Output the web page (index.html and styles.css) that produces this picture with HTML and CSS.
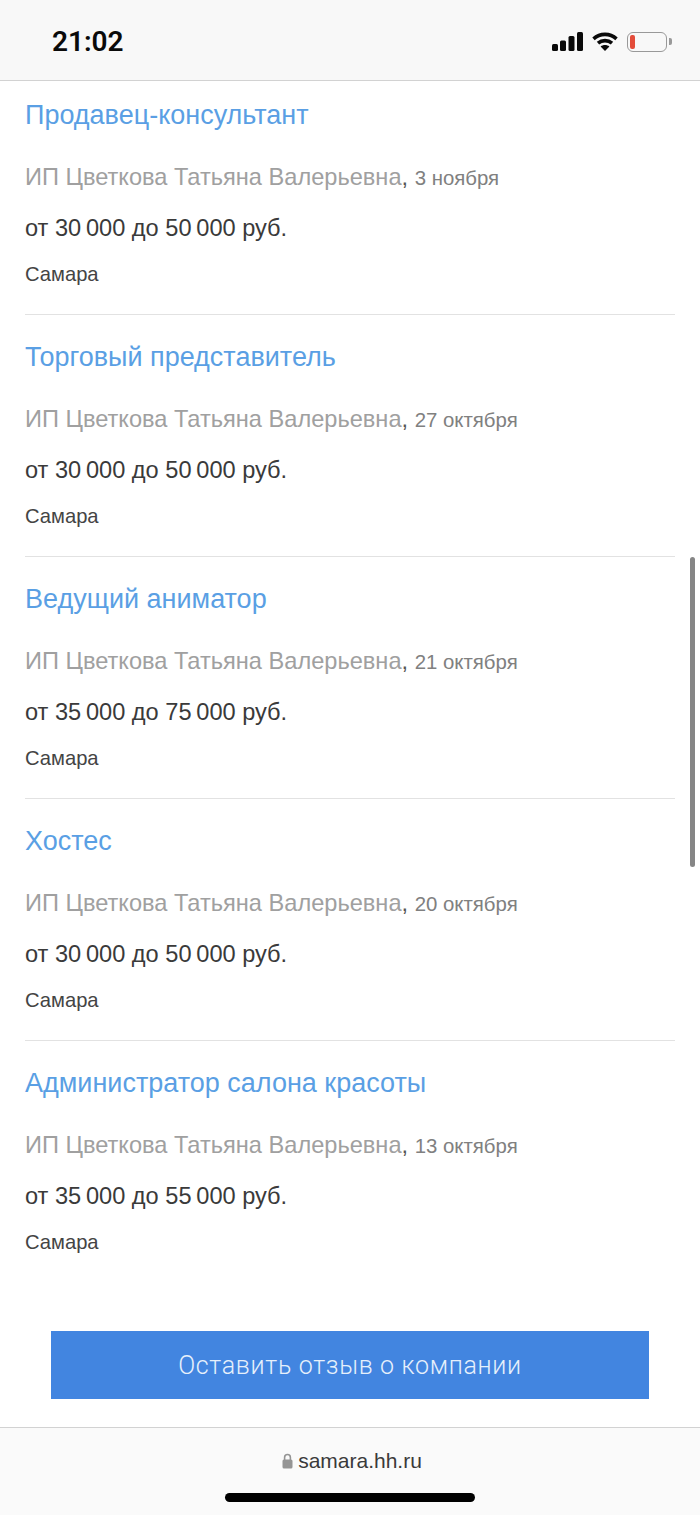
FILE: index.html
```html
<!DOCTYPE html>
<html lang="ru">
  <head>
    <meta charset="UTF-8" />
    <meta name="viewport" content="width=device-width, initial-scale=1.0" />
    <title>samara.hh.ru</title>
    <link rel="stylesheet" href="styles.css">
  </head>

  <body>
    <div class="statusBar">
      <span class="time">21:02</span>
      <div class="statusIcons">
        <svg class="signal" width="31" height="19" viewBox="0 0 31 19">
          <rect x="0" y="12" width="6" height="7" rx="1.5" />
          <rect x="8" y="8.5" width="6" height="10.5" rx="1.5" />
          <rect x="16.5" y="4" width="6" height="15" rx="1.5" />
          <rect x="25" y="0" width="6" height="19" rx="1.5" />
        </svg>
        <svg class="wifi" width="26" height="19" viewBox="0 0 26 19">
          <path d="M1.5 6.8C8 .9 18 .9 24.5 6.8" />
          <path d="M6 11.2c4-3.5 10-3.5 14 0" />
          <path class="wifiDot" d="M13 19l-4.4-4.6c2.4-2 6.4-2 8.8 0z" />
        </svg>
        <div class="battery">
          <div class="batteryLevel"></div>
        </div>
      </div>
    </div>

    <div class="vacancies">
      <div class="vacancy">
        <a class="vacancyTitle">Продавец-консультант</a>
        <p class="employer">ИП Цветкова Татьяна Валерьевна<span class="comma">,</span> <span class="date">3 ноября</span></p>
        <p class="salary">от 30&#8201;000 до 50&#8201;000 руб.</p>
        <p class="city">Самара</p>
      </div>
      <div class="vacancy">
        <a class="vacancyTitle">Торговый представитель</a>
        <p class="employer">ИП Цветкова Татьяна Валерьевна<span class="comma">,</span> <span class="date">27 октября</span></p>
        <p class="salary">от 30&#8201;000 до 50&#8201;000 руб.</p>
        <p class="city">Самара</p>
      </div>
      <div class="vacancy">
        <a class="vacancyTitle">Ведущий аниматор</a>
        <p class="employer">ИП Цветкова Татьяна Валерьевна<span class="comma">,</span> <span class="date">21 октября</span></p>
        <p class="salary">от 35&#8201;000 до 75&#8201;000 руб.</p>
        <p class="city">Самара</p>
      </div>
      <div class="vacancy">
        <a class="vacancyTitle">Хостес</a>
        <p class="employer">ИП Цветкова Татьяна Валерьевна<span class="comma">,</span> <span class="date">20 октября</span></p>
        <p class="salary">от 30&#8201;000 до 50&#8201;000 руб.</p>
        <p class="city">Самара</p>
      </div>
      <div class="vacancy">
        <a class="vacancyTitle">Администратор салона красоты</a>
        <p class="employer">ИП Цветкова Татьяна Валерьевна<span class="comma">,</span> <span class="date">13 октября</span></p>
        <p class="salary">от 35&#8201;000 до 55&#8201;000 руб.</p>
        <p class="city">Самара</p>
      </div>
    </div>

    <button class="reviewButton">Оставить отзыв о компании</button>

    <div class="addressBar">
      <div class="address">
        <svg class="lock" width="11" height="16" viewBox="0 0 11 16">
          <path d="M2.6 7V4.4a2.9 2.9 0 0 1 5.8 0V7" />
          <rect x="0.5" y="6.5" width="10" height="9" rx="1.5" />
        </svg>
        <span>samara.hh.ru</span>
      </div>
      <div class="homeIndicator"></div>
    </div>

    <div class="scrollThumb"></div>
  </body>
</html>
```

FILE: styles.css
```css
html,
body {
  height: 1515px;
}

body {
  position: relative;
  margin: 0;
  overflow: hidden;
  background-color: #fff;
  font-family: "Liberation Sans", Arial, sans-serif;
  color: #333;
  display: flex;
  flex-direction: column;
}

p {
  margin: 0;
}

.statusBar {
  box-sizing: border-box;
  height: 81px;
  padding: 0 33px 0 52px;
  display: flex;
  align-items: center;
  justify-content: space-between;
  background-color: #f8f8f8;
  border-bottom: 1px solid #d2d2d2;
}

.time {
  font-family: Roboto, sans-serif;
  font-size: 28px;
  font-weight: 600;
  color: #0a0a0a;
  margin-top: 3px;
}

.statusIcons {
  display: flex;
  align-items: center;
  gap: 9px;
  margin-top: 3px;
}

.signal rect {
  fill: #0a0a0a;
}

.wifi path {
  fill: none;
  stroke: #0a0a0a;
  stroke-width: 3.6;
}

.wifi .wifiDot {
  fill: #0a0a0a;
  stroke: none;
}

.battery {
  position: relative;
  box-sizing: border-box;
  width: 40px;
  height: 20px;
  padding: 2px;
  border: 1.5px solid #999;
  border-radius: 6px;
}

.battery::after {
  content: "";
  position: absolute;
  right: -5.5px;
  top: 5px;
  width: 2.5px;
  height: 7px;
  background-color: #999;
  border-radius: 0 2px 2px 0;
}

.batteryLevel {
  width: 5px;
  height: 100%;
  background-color: #e34c3a;
  border-radius: 2px;
}

.vacancies {
  margin: 0 25px;
}

.vacancy {
  height: 217px;
  padding-top: 24px;
  border-bottom: 1px solid #e2e2e2;
}

.vacancy:first-child {
  padding-top: 16px;
}

.vacancy:last-child {
  border-bottom: none;
}

.vacancyTitle {
  display: block;
  font-size: 27px;
  line-height: 36px;
  color: #5a9fe4;
}

.employer {
  margin-top: 26px;
  font-size: 23.6px;
  line-height: 36px;
  color: #a0a0a0;
}

.comma {
  color: #555;
}

.date {
  font-size: 20.4px;
  color: #808080;
}

.salary {
  margin-top: 14px;
  font-size: 23.6px;
  line-height: 36px;
  color: #3a3a3a;
}

.city {
  margin-top: 13px;
  font-size: 20.2px;
  line-height: 30px;
  color: #444;
}

.reviewButton {
  display: block;
  width: 598px;
  height: 68px;
  margin: 49px 0 0 51px;
  padding: 0;
  border: none;
  background-color: #4285e0;
  color: #e6f0fb;
  font-family: Roboto, sans-serif;
  font-weight: 300;
  font-size: 25px;
  letter-spacing: 0.7px;
}

.addressBar {
  flex: 1;
  margin-top: 28px;
  background-color: #fafafa;
  border-top: 1px solid #d2d2d2;
  display: flex;
  flex-direction: column;
  align-items: center;
}

.address {
  margin: 20px 0 0 4px;
  height: 26px;
  display: flex;
  align-items: center;
  gap: 5px;
  font-size: 21px;
  color: #3a3a3a;
}

.lock path {
  fill: none;
  stroke: #949494;
  stroke-width: 1.6;
}

.lock rect {
  fill: #949494;
}

.homeIndicator {
  width: 250px;
  height: 9px;
  margin-top: 19px;
  background-color: #000;
  border-radius: 5px;
}

.scrollThumb {
  position: absolute;
  left: 690px;
  top: 557px;
  width: 5px;
  height: 310px;
  background-color: #868686;
  border-radius: 3px;
}
```
